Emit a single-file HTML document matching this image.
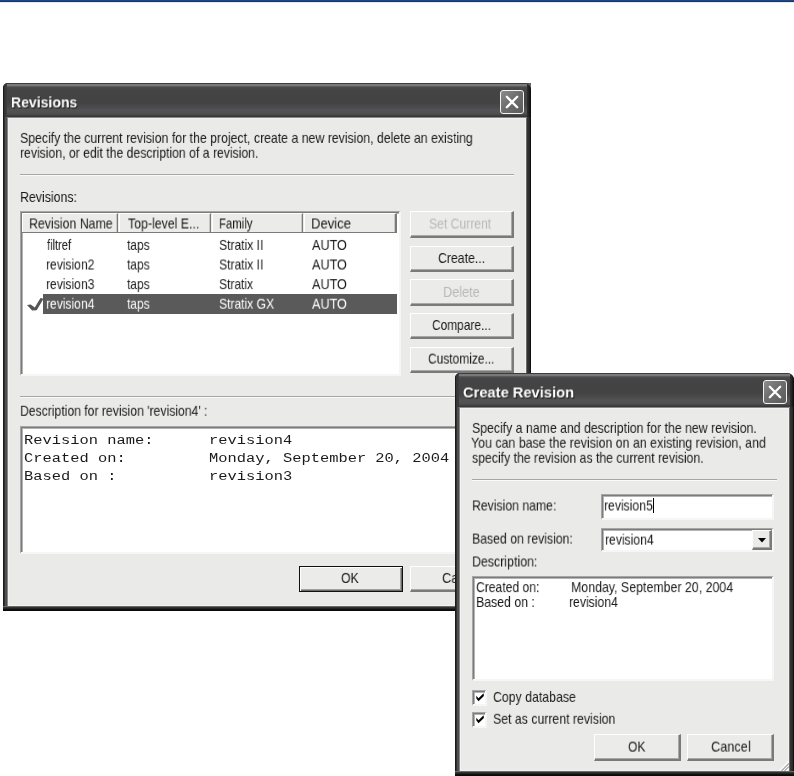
<!DOCTYPE html>
<html><head><meta charset="utf-8">
<style>
html,body{margin:0;padding:0;}
body{width:794px;height:776px;overflow:hidden;background:#fff;position:relative;font-family:"Liberation Sans",sans-serif;}
.a{position:absolute;box-sizing:border-box;}
.t{position:absolute;white-space:pre;transform-origin:0 0;will-change:transform;}
.title{background:linear-gradient(to bottom,#3c3c3c 0,#3c3c3c 1px,#7a7c7a 1px,#78787a 3px,#5a5a5c 3px,#5a5a5c 4px,#4c4c4e 4px,#484848 5px,#444446 7px,#434343 20px,#4a4a4c 24px,#535355 27px,#525254 29px,#4e4e50 31px,#454547 32px,#3a3a3a 33px,#363636 34px);}
.btn{background:#ebebe9;border-top:1px solid #fff;border-left:1px solid #fff;border-right:2px solid #7a7a7a;border-bottom:2px solid #7a7a7a;box-shadow:inset -1px -1px 0 #a8a8a8;}
.sunk{background:#fff;border-top:1px solid #a6a6a6;border-left:1px solid #a6a6a6;border-right:2px solid #f6f6f6;border-bottom:2px solid #f6f6f6;box-shadow:inset 1px 1px 0 #7c7c7c,inset 2px 2px 0 #b4b4b4;}
.close{width:24px;height:24px;border:1px solid #f4f4f4;border-radius:3px;background:linear-gradient(135deg,#8c8c8c 0%,#6e6e6e 45%,#5c5c5c 100%);}
</style></head><body>
<!-- top bar -->
<div class="a" style="left:0;top:0;width:794px;height:3px;background:linear-gradient(to bottom,#22467f 0,#22467f 1px,#143873 1px,#143873 2px,#e6e9ef 2px)"></div>

<!-- ================= Revisions window ================= -->
<div class="a" style="left:524px;top:83px;width:7px;height:7px;background:linear-gradient(to bottom,#5a5a5a,#8a8a8a)"></div>
<div class="a" style="left:3px;top:83px;width:528px;height:528px;background:#2e2e2e;border-radius:5px 7px 0 0;overflow:hidden">
  <div class="a title" style="left:0;top:0;width:528px;height:34px"></div>
  <div class="a" style="left:0;top:0;width:5px;height:528px;background:linear-gradient(to right,#1b1b1b 0,#1b1b1b 1px,#303030 1px,#303030 2px,#505050 2px,#505050 3px,#4c4c4e 3px,#4c4c4e 4px,#888 4px);top:34px;height:494px"></div>
  <div class="a" style="left:0;top:0;width:4px;height:34px;background:linear-gradient(to right,#1b1b1b 0,#1b1b1b 1px,#333 1px,#3a3a3a 3px,#404040 4px)"></div>
  <div class="a" style="left:523px;top:34px;width:5px;height:494px;background:linear-gradient(to right,#6a6a6a 0,#6a6a6a 1px,#363636 1px,#2e2e2e 3px,#242424 4px,#101010 4px)"></div>
  <div class="a" style="left:524px;top:0;width:4px;height:34px;background:linear-gradient(to right,#303030 0,#222 2px,#101010 3px)"></div>
  <div class="a" style="left:4px;top:34px;width:520px;height:1px;background:#888"></div>
  <div class="a" style="left:0;top:523px;width:528px;height:5px;background:linear-gradient(to bottom,#6a6a6a 0,#6a6a6a 1px,#333 1px,#333 2px,#242422 2px,#242422 3px,#131110 3px,#131110 4px,#0a0a0a 4px)"></div>
</div>
<div class="a" style="left:8px;top:118px;width:518px;height:488px;background:#eaeae8;border:1px solid #f2f2f0"></div>
<div class="a close" style="left:500px;top:90px"></div>
<svg class="a" style="left:500px;top:90px" width="24" height="24"><path d="M6.8 6.8 L17.2 17.2 M17.2 6.8 L6.8 17.2" stroke="#fff" stroke-width="2.3" stroke-linecap="round"/></svg>

<!-- separator -->
<div class="a" style="left:20px;top:174px;width:494px;height:1px;background:#a6a6a6"></div>
<div class="a" style="left:20px;top:175px;width:494px;height:1px;background:#fafafa"></div>

<!-- listview -->
<div class="a sunk" style="left:20px;top:211px;width:381px;height:165px;"></div>
<div class="a" style="left:22px;top:213px;width:375px;height:20px;background:#ebebe9;border-bottom:1px solid #7a7a7a"></div>
<div class="a" style="left:22px;top:213px;width:96px;height:19px;border-top:1px solid #fff;border-left:1px solid #fff;border-right:1px solid #7a7a7a;box-shadow:inset -1px 0 0 #c8c8c8"></div>
<div class="a" style="left:119px;top:213px;width:92px;height:19px;border-top:1px solid #fff;border-left:1px solid #fff;border-right:1px solid #7a7a7a;box-shadow:inset -1px 0 0 #c8c8c8"></div>
<div class="a" style="left:212px;top:213px;width:91px;height:19px;border-top:1px solid #fff;border-left:1px solid #fff;border-right:1px solid #7a7a7a;box-shadow:inset -1px 0 0 #c8c8c8"></div>
<div class="a" style="left:304px;top:213px;width:93px;height:19px;border-top:1px solid #fff;border-left:1px solid #fff;border-right:2px solid #7a7a7a;box-shadow:inset -1px 0 0 #c8c8c8"></div>
<!-- selected row -->
<div class="a" style="left:43px;top:294px;width:354px;height:20px;background:#5a5a5a"></div>
<svg class="a" style="left:26px;top:296px" width="18" height="16"><path d="M1.0 9.0 L4.7 8.5 L8.8 11.4 L14.5 1.9 L17.5 2.7 L10.7 14.2 L6.2 14.4 Z" fill="#555"/></svg>

<!-- right buttons -->
<div class="a btn" style="left:410px;top:211px;width:104px;height:27px"></div>
<div class="a btn" style="left:410px;top:246px;width:104px;height:26px"></div>
<div class="a btn" style="left:410px;top:279px;width:104px;height:27px"></div>
<div class="a btn" style="left:410px;top:313px;width:104px;height:26px"></div>
<div class="a btn" style="left:410px;top:347px;width:104px;height:26px"></div>

<!-- separator 2 -->
<div class="a" style="left:20px;top:396px;width:494px;height:1px;background:#a6a6a6"></div>
<div class="a" style="left:20px;top:397px;width:494px;height:1px;background:#fafafa"></div>

<!-- description textarea -->
<div class="a sunk" style="left:20px;top:426px;width:494px;height:128px;"></div>

<!-- OK / Cancel -->
<div class="a" style="left:299px;top:566px;width:104px;height:26px;border:1px solid #111;background:#ebebe9;box-shadow:inset 1px 1px 0 #fff,inset -1px -1px 0 #6a6a6a,inset -2px -2px 0 #a0a0a0"></div>
<div class="a btn" style="left:410px;top:566px;width:104px;height:26px"></div>

<div class="t" style="left:10.89px;top:94px;font-family:'Liberation Sans';font-weight:700;font-size:15.5px;line-height:15.5px;color:#fff;transform:translateY(0.40px) scaleX(0.9056);text-shadow:1px 1px 0 #1a1a1a;">Revisions</div>
<div class="t" style="left:19.75px;top:130px;font-family:'Liberation Sans';font-weight:400;font-size:14.5px;line-height:14.5px;color:#1a1a1a;transform:translateY(0.90px) scaleX(0.8485);">Specify the current revision for the project, create a new revision, delete an existing</div>
<div class="t" style="left:19.76px;top:145px;font-family:'Liberation Sans';font-weight:400;font-size:14.5px;line-height:14.5px;color:#1a1a1a;transform:translateY(0.80px) scaleX(0.8427);">revision, or edit the description of a revision.</div>
<div class="t" style="left:20.05px;top:190px;font-family:'Liberation Sans';font-weight:400;font-size:14.5px;line-height:14.5px;color:#1a1a1a;transform:translateY(0.00px) scaleX(0.8523);">Revisions:</div>
<div class="t" style="left:29.15px;top:216px;font-family:'Liberation Sans';font-weight:400;font-size:14.5px;line-height:14.5px;color:#1a1a1a;transform:translateY(0.50px) scaleX(0.8505);">Revision Name</div>
<div class="t" style="left:127.80px;top:216px;font-family:'Liberation Sans';font-weight:400;font-size:14.5px;line-height:14.5px;color:#1a1a1a;transform:translateY(0.50px) scaleX(0.8506);">Top-level E...</div>
<div class="t" style="left:218.82px;top:216px;font-family:'Liberation Sans';font-weight:400;font-size:14.5px;line-height:14.5px;color:#1a1a1a;transform:translateY(0.50px) scaleX(0.7833);">Family</div>
<div class="t" style="left:311.10px;top:216px;font-family:'Liberation Sans';font-weight:400;font-size:14.5px;line-height:14.5px;color:#1a1a1a;transform:translateY(0.50px) scaleX(0.9023);">Device</div>
<div class="t" style="left:46.50px;top:237px;font-family:'Liberation Sans';font-weight:400;font-size:14.5px;line-height:14.5px;color:#1a1a1a;transform:translateY(0.90px) scaleX(0.7656);">filtref</div>
<div class="t" style="left:127.30px;top:237px;font-family:'Liberation Sans';font-weight:400;font-size:14.5px;line-height:14.5px;color:#1a1a1a;transform:translateY(0.90px) scaleX(0.8259);">taps</div>
<div class="t" style="left:218.76px;top:237px;font-family:'Liberation Sans';font-weight:400;font-size:14.5px;line-height:14.5px;color:#1a1a1a;transform:translateY(0.90px) scaleX(0.8353);">Stratix II</div>
<div class="t" style="left:311.50px;top:237px;font-family:'Liberation Sans';font-weight:400;font-size:14.5px;line-height:14.5px;color:#1a1a1a;transform:translateY(0.90px) scaleX(0.8692);">AUTO</div>
<div class="t" style="left:45.67px;top:257px;font-family:'Liberation Sans';font-weight:400;font-size:14.5px;line-height:14.5px;color:#1a1a1a;transform:translateY(0.50px) scaleX(0.8333);">revision2</div>
<div class="t" style="left:127.30px;top:257px;font-family:'Liberation Sans';font-weight:400;font-size:14.5px;line-height:14.5px;color:#1a1a1a;transform:translateY(0.50px) scaleX(0.8259);">taps</div>
<div class="t" style="left:218.76px;top:257px;font-family:'Liberation Sans';font-weight:400;font-size:14.5px;line-height:14.5px;color:#1a1a1a;transform:translateY(0.50px) scaleX(0.8353);">Stratix II</div>
<div class="t" style="left:311.50px;top:257px;font-family:'Liberation Sans';font-weight:400;font-size:14.5px;line-height:14.5px;color:#1a1a1a;transform:translateY(0.50px) scaleX(0.8692);">AUTO</div>
<div class="t" style="left:45.67px;top:277px;font-family:'Liberation Sans';font-weight:400;font-size:14.5px;line-height:14.5px;color:#1a1a1a;transform:translateY(0.10px) scaleX(0.8333);">revision3</div>
<div class="t" style="left:127.30px;top:277px;font-family:'Liberation Sans';font-weight:400;font-size:14.5px;line-height:14.5px;color:#1a1a1a;transform:translateY(0.10px) scaleX(0.8259);">taps</div>
<div class="t" style="left:218.77px;top:277px;font-family:'Liberation Sans';font-weight:400;font-size:14.5px;line-height:14.5px;color:#1a1a1a;transform:translateY(0.10px) scaleX(0.8300);">Stratix</div>
<div class="t" style="left:311.50px;top:277px;font-family:'Liberation Sans';font-weight:400;font-size:14.5px;line-height:14.5px;color:#1a1a1a;transform:translateY(0.10px) scaleX(0.8692);">AUTO</div>
<div class="t" style="left:45.67px;top:296px;font-family:'Liberation Sans';font-weight:400;font-size:14.5px;line-height:14.5px;color:#fff;transform:translateY(0.70px) scaleX(0.8333);">revision4</div>
<div class="t" style="left:127.30px;top:296px;font-family:'Liberation Sans';font-weight:400;font-size:14.5px;line-height:14.5px;color:#fff;transform:translateY(0.70px) scaleX(0.8259);">taps</div>
<div class="t" style="left:218.77px;top:296px;font-family:'Liberation Sans';font-weight:400;font-size:14.5px;line-height:14.5px;color:#fff;transform:translateY(0.70px) scaleX(0.8338);">Stratix GX</div>
<div class="t" style="left:311.50px;top:296px;font-family:'Liberation Sans';font-weight:400;font-size:14.5px;line-height:14.5px;color:#fff;transform:translateY(0.70px) scaleX(0.8692);">AUTO</div>
<div class="t" style="left:428.66px;top:216px;font-family:'Liberation Sans';font-weight:400;font-size:14.5px;line-height:14.5px;color:#b8b8b8;transform:translateY(0.60px) scaleX(0.8384);">Set Current</div>
<div class="t" style="left:438.15px;top:251px;font-family:'Liberation Sans';font-weight:400;font-size:14.5px;line-height:14.5px;color:#1a1a1a;transform:translateY(0.00px) scaleX(0.8472);">Create...</div>
<div class="t" style="left:442.92px;top:284px;font-family:'Liberation Sans';font-weight:400;font-size:14.5px;line-height:14.5px;color:#b8b8b8;transform:translateY(0.90px) scaleX(0.8775);">Delete</div>
<div class="t" style="left:431.68px;top:318px;font-family:'Liberation Sans';font-weight:400;font-size:14.5px;line-height:14.5px;color:#1a1a1a;transform:translateY(0.00px) scaleX(0.8214);">Compare...</div>
<div class="t" style="left:427.88px;top:351px;font-family:'Liberation Sans';font-weight:400;font-size:14.5px;line-height:14.5px;color:#1a1a1a;transform:translateY(0.60px) scaleX(0.8244);">Customize...</div>
<div class="t" style="left:20.46px;top:403px;font-family:'Liberation Sans';font-weight:400;font-size:14.5px;line-height:14.5px;color:#1a1a1a;transform:translateY(0.80px) scaleX(0.8398);">Description for revision &#x27;revision4&#x27; :</div>
<div class="t" style="left:24.20px;top:433px;font-family:'Liberation Mono';font-weight:400;font-size:13.7px;line-height:13.7px;color:#1a1a1a;transform:translateY(0.50px) scaleX(1.1253);">Revision name:</div>
<div class="t" style="left:24.20px;top:451px;font-family:'Liberation Mono';font-weight:400;font-size:13.7px;line-height:13.7px;color:#1a1a1a;transform:translateY(0.70px) scaleX(1.1253);">Created on:</div>
<div class="t" style="left:24.20px;top:470px;font-family:'Liberation Mono';font-weight:400;font-size:13.7px;line-height:13.7px;color:#1a1a1a;transform:translateY(0.30px) scaleX(1.1253);">Based on :</div>
<div class="t" style="left:209.20px;top:433px;font-family:'Liberation Mono';font-weight:400;font-size:13.7px;line-height:13.7px;color:#1a1a1a;transform:translateY(0.50px) scaleX(1.1253);">revision4</div>
<div class="t" style="left:209.20px;top:451px;font-family:'Liberation Mono';font-weight:400;font-size:13.7px;line-height:13.7px;color:#1a1a1a;transform:translateY(0.70px) scaleX(1.1253);">Monday, September 20, 2004</div>
<div class="t" style="left:209.20px;top:470px;font-family:'Liberation Mono';font-weight:400;font-size:13.7px;line-height:13.7px;color:#1a1a1a;transform:translateY(0.30px) scaleX(1.1253);">revision3</div>
<div class="t" style="left:341.15px;top:570px;font-family:'Liberation Sans';font-weight:400;font-size:14.5px;line-height:14.5px;color:#1a1a1a;transform:translateY(0.90px) scaleX(0.8450);">OK</div>
<div class="t" style="left:442.12px;top:570px;font-family:'Liberation Sans';font-weight:400;font-size:14.5px;line-height:14.5px;color:#1a1a1a;transform:translateY(0.90px) scaleX(0.8837);">Cancel</div>

<!-- ================= Create Revision dialog ================= -->
<div class="a" style="left:455px;top:373px;width:7px;height:7px;background:#f6f6f6"></div>
<div class="a" style="left:455px;top:373px;width:339px;height:403px;background:#2e2e2e;border-radius:5px 7px 0 0;overflow:hidden">
  <div class="a title" style="left:0;top:0;width:339px;height:34px"></div>
  <div class="a" style="left:0;top:34px;width:5px;height:369px;background:linear-gradient(to right,#1b1b1b 0,#1b1b1b 1px,#303030 1px,#303030 2px,#505050 2px,#505050 3px,#4c4c4e 3px,#4c4c4e 4px,#888 4px)"></div>
  <div class="a" style="left:0;top:0;width:4px;height:34px;background:linear-gradient(to right,#1b1b1b 0,#1b1b1b 1px,#333 1px,#3a3a3a 3px,#404040 4px)"></div>
  <div class="a" style="left:334px;top:34px;width:5px;height:369px;background:linear-gradient(to right,#6a6a6a 0,#6a6a6a 1px,#363636 1px,#2e2e2e 3px,#242424 4px,#101010 4px)"></div>
  <div class="a" style="left:335px;top:0;width:4px;height:34px;background:linear-gradient(to right,#303030 0,#222 2px,#101010 3px)"></div>
  <div class="a" style="left:4px;top:34px;width:331px;height:1px;background:#888"></div>
  <div class="a" style="left:0;top:398px;width:339px;height:5px;background:linear-gradient(to bottom,#6a6a6a 0,#6a6a6a 1px,#333 1px,#333 2px,#242422 2px,#242422 3px,#131110 3px,#131110 4px,#0a0a0a 4px)"></div>
</div>
<div class="a" style="left:460px;top:408px;width:329px;height:363px;background:#eaeae8;border:1px solid #f2f2f0"></div>
<div class="a close" style="left:763px;top:380px"></div>
<svg class="a" style="left:763px;top:380px" width="24" height="24"><path d="M6.8 6.8 L17.2 17.2 M17.2 6.8 L6.8 17.2" stroke="#fff" stroke-width="2.3" stroke-linecap="round"/></svg>

<div class="a" style="left:472px;top:479px;width:305px;height:1px;background:#a6a6a6"></div>
<div class="a" style="left:472px;top:480px;width:305px;height:1px;background:#fafafa"></div>

<!-- textbox -->
<div class="a sunk" style="left:601px;top:494px;width:173px;height:26px;"></div>
<div class="a" style="left:653px;top:498px;width:1px;height:15px;background:#000"></div>
<!-- combo -->
<div class="a sunk" style="left:601px;top:528px;width:173px;height:24px;"></div>
<div class="a btn" style="left:752px;top:530px;width:20px;height:20px"></div>
<svg class="a" style="left:752px;top:530px" width="20" height="20"><path d="M6 8 L14 8 L10 12.5 Z" fill="#000"/></svg>

<!-- description area -->
<div class="a sunk" style="left:472px;top:576px;width:302px;height:105px;"></div>

<!-- checkboxes -->
<div class="a sunk" style="left:472px;top:690px;width:15px;height:16px;"></div>
<svg class="a" style="left:472px;top:690px" width="15" height="16"><path d="M4.2 5.8 L6.5 8.2 L11.6 3.2 L11.9 6.0 L6.5 11.2 L4.4 8.6 Z" fill="#000"/></svg>
<div class="a sunk" style="left:472px;top:712px;width:15px;height:16px;"></div>
<svg class="a" style="left:472px;top:712px" width="15" height="16"><path d="M4.2 5.8 L6.5 8.2 L11.6 3.2 L11.9 6.0 L6.5 11.2 L4.4 8.6 Z" fill="#000"/></svg>

<div class="a btn" style="left:594px;top:734px;width:87px;height:27px"></div>
<div class="a btn" style="left:687px;top:734px;width:87px;height:27px"></div>

<!-- size grip -->
<svg class="a" style="left:779px;top:761px" width="10" height="10"><path d="M0 10 L10 0" stroke="#fff" stroke-width="1.2"/><path d="M2.5 10 L10 2.5 M5.5 10 L10 5.5" stroke="#a8a8a8" stroke-width="1.2"/><path d="M4 10 L10 4 M7 10 L10 7" stroke="#fafafa" stroke-width="1"/></svg>

<div class="t" style="left:463.05px;top:384px;font-family:'Liberation Sans';font-weight:700;font-size:15.5px;line-height:15.5px;color:#fff;transform:translateY(0.50px) scaleX(0.9478);text-shadow:1px 1px 0 #1a1a1a;">Create Revision</div>
<div class="t" style="left:472.05px;top:420px;font-family:'Liberation Sans';font-weight:400;font-size:14.5px;line-height:14.5px;color:#1a1a1a;transform:translateY(0.90px) scaleX(0.8473);">Specify a name and description for the new revision.</div>
<div class="t" style="left:471.45px;top:435px;font-family:'Liberation Sans';font-weight:400;font-size:14.5px;line-height:14.5px;color:#1a1a1a;transform:translateY(0.70px) scaleX(0.8538);">You can base the revision on an existing revision, and</div>
<div class="t" style="left:472.15px;top:450px;font-family:'Liberation Sans';font-weight:400;font-size:14.5px;line-height:14.5px;color:#1a1a1a;transform:translateY(0.80px) scaleX(0.8452);">specify the revision as the current revision.</div>
<div class="t" style="left:472.16px;top:498px;font-family:'Liberation Sans';font-weight:400;font-size:14.5px;line-height:14.5px;color:#1a1a1a;transform:translateY(0.50px) scaleX(0.8439);">Revision name:</div>
<div class="t" style="left:472.16px;top:531px;font-family:'Liberation Sans';font-weight:400;font-size:14.5px;line-height:14.5px;color:#1a1a1a;transform:translateY(0.60px) scaleX(0.8444);">Based on revision:</div>
<div class="t" style="left:472.15px;top:554px;font-family:'Liberation Sans';font-weight:400;font-size:14.5px;line-height:14.5px;color:#1a1a1a;transform:translateY(0.50px) scaleX(0.8541);">Description:</div>
<div class="t" style="left:603.76px;top:498px;font-family:'Liberation Sans';font-weight:400;font-size:14.5px;line-height:14.5px;color:#1a1a1a;transform:translateY(0.50px) scaleX(0.8404);">revision5</div>
<div class="t" style="left:604.96px;top:532px;font-family:'Liberation Sans';font-weight:400;font-size:14.5px;line-height:14.5px;color:#1a1a1a;transform:translateY(0.60px) scaleX(0.8386);">revision4</div>
<div class="t" style="left:475.86px;top:580px;font-family:'Liberation Sans';font-weight:400;font-size:14.5px;line-height:14.5px;color:#1a1a1a;transform:translateY(0.10px) scaleX(0.8365);">Created on:</div>
<div class="t" style="left:570.55px;top:580px;font-family:'Liberation Sans';font-weight:400;font-size:14.5px;line-height:14.5px;color:#1a1a1a;transform:translateY(0.10px) scaleX(0.8534);">Monday, September 20, 2004</div>
<div class="t" style="left:475.85px;top:595px;font-family:'Liberation Sans';font-weight:400;font-size:14.5px;line-height:14.5px;color:#1a1a1a;transform:translateY(0.00px) scaleX(0.8478);">Based on :</div>
<div class="t" style="left:569.36px;top:595px;font-family:'Liberation Sans';font-weight:400;font-size:14.5px;line-height:14.5px;color:#1a1a1a;transform:translateY(0.00px) scaleX(0.8421);">revision4</div>
<div class="t" style="left:493.05px;top:689px;font-family:'Liberation Sans';font-weight:400;font-size:14.5px;line-height:14.5px;color:#1a1a1a;transform:translateY(0.90px) scaleX(0.8490);">Copy database</div>
<div class="t" style="left:493.05px;top:711px;font-family:'Liberation Sans';font-weight:400;font-size:14.5px;line-height:14.5px;color:#1a1a1a;transform:translateY(0.80px) scaleX(0.8476);">Set as current revision</div>
<div class="t" style="left:628.47px;top:739px;font-family:'Liberation Sans';font-weight:400;font-size:14.5px;line-height:14.5px;color:#1a1a1a;transform:translateY(0.60px) scaleX(0.8300);">OK</div>
<div class="t" style="left:711.32px;top:739px;font-family:'Liberation Sans';font-weight:400;font-size:14.5px;line-height:14.5px;color:#1a1a1a;transform:translateY(0.60px) scaleX(0.8791);">Cancel</div>
</body></html>
